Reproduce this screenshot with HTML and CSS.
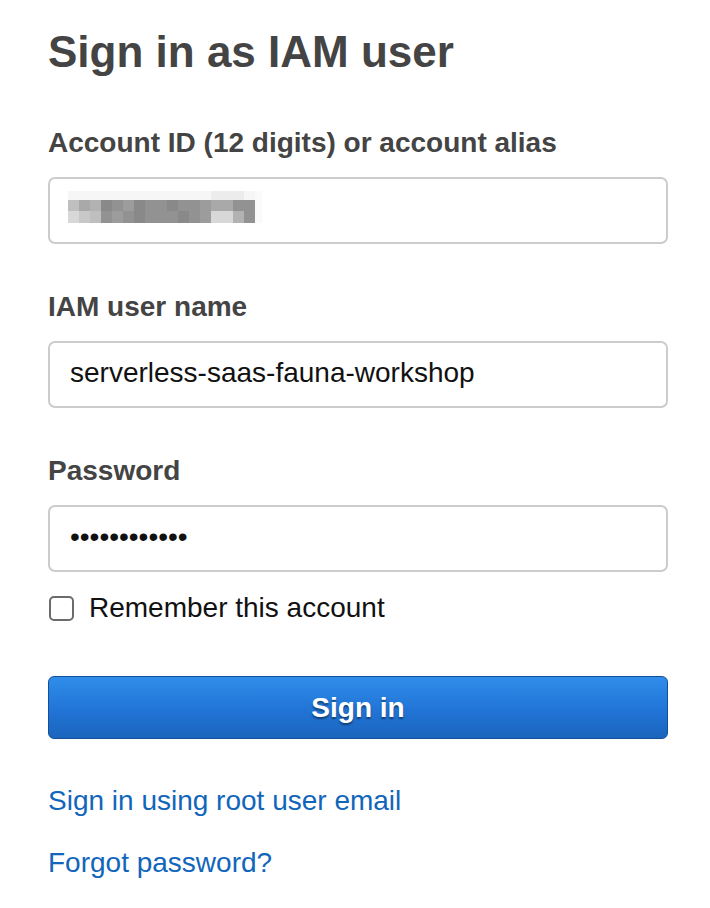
FILE: index.html
```html
<!DOCTYPE html>
<html lang="en">
<head>
<meta charset="utf-8">
<title>Sign in as IAM user</title>
<link rel="stylesheet" href="styles.css">
</head>
<body>
<main class="page">
  <h1 class="title">Sign in as IAM user</h1>

  <div class="field">
    <label class="label">Account ID (12 digits) or account alias</label>
    <div class="input">
      <div class="blur" aria-hidden="true">
        <span class="t1"></span><span class="t1"></span><span class="t1"></span><span class="t1"></span><span class="t1"></span><span class="t1"></span><span class="t1"></span><span class="t1"></span><span class="t1"></span><span class="t1"></span><span class="t1"></span><span class="t1"></span><span class="t1"></span><span class="t2"></span><span class="t2"></span><span class="t2"></span><span class="t1"></span><span class="t0"></span>
        <span class="g4"></span><span class="g6"></span><span class="g5"></span><span class="g9"></span><span class="g8"></span><span class="g7"></span><span class="g9"></span><span class="g8"></span><span class="g8"></span><span class="g9"></span><span class="g8"></span><span class="g8"></span><span class="g7"></span><span class="g6"></span><span class="g6"></span><span class="g8"></span><span class="g8"></span><span class="t0"></span>
        <span class="g2"></span><span class="g3"></span><span class="g4"></span><span class="g8"></span><span class="g7"></span><span class="g8"></span><span class="g9"></span><span class="g8"></span><span class="g8"></span><span class="g8"></span><span class="g9"></span><span class="g8"></span><span class="g7"></span><span class="g2"></span><span class="g2"></span><span class="g5"></span><span class="g8"></span><span class="t0"></span>
      </div>
    </div>
  </div>

  <div class="field">
    <label class="label">IAM user name</label>
    <div class="input"><span class="value">serverless-saas-fauna-workshop</span></div>
  </div>

  <div class="field">
    <label class="label">Password</label>
    <div class="input"><span class="value">••••••••••••</span></div>
  </div>

  <label class="remember">
    <span class="checkbox"></span>
    <span class="remember-text">Remember this account</span>
  </label>

  <button class="btn" type="button">Sign in</button>

  <nav class="links">
    <a class="link" href="#">Sign in using root user email</a>
    <a class="link" href="#">Forgot password?</a>
  </nav>
</main>
</body>
</html>
```

FILE: styles.css
```css
* { box-sizing: border-box; }
html, body {
  margin: 0;
  padding: 0;
  background: #ffffff;
}
body {
  font-family: "Liberation Sans", Arial, Helvetica, sans-serif;
}
.page {
  width: 710px;
  padding: 26px 42px 0 48px;
  display: flex;
  flex-direction: column;
}
.title {
  margin: 0;
  font-size: 44px;
  line-height: 52px;
  font-weight: 700;
  color: #444444;
}
.field {
  display: flex;
  flex-direction: column;
  margin-top: 49px;
}
.field + .field { margin-top: 47px; }
.label {
  font-size: 28px;
  font-weight: 700;
  color: #444444;
  line-height: 32px;
  margin-bottom: 18px;
}
.input {
  width: 620px;
  height: 67px;
  border: 2px solid #cccccc;
  border-radius: 7px;
  display: flex;
  align-items: center;
  padding-left: 20px;
  padding-bottom: 4px;
  background: #fff;
}
.value {
  font-size: 28px;
  color: #111111;
  line-height: 32px;
}
.blur {
  display: grid;
  grid-template-columns: repeat(17, 11px) 7px;
  grid-template-rows: 9px 11px 12px;
  margin-left: -2px;
  margin-bottom: 4px;
}
.blur span { display: block; }
.t0 { background: #fafafa; }
.t1 { background: #f6f6f6; }
.t2 { background: #ececec; }
.g2 { background: #d8d8d8; }
.g3 { background: #c8c8c8; }
.g4 { background: #bfbfbf; }
.g5 { background: #b2b2b2; }
.g6 { background: #a9a9a9; }
.g7 { background: #9c9c9c; }
.g8 { background: #929292; }
.g9 { background: #898989; }

.remember {
  display: flex;
  align-items: center;
  margin-top: 20px;
  gap: 15px;
  height: 32px;
}
.checkbox {
  width: 25px;
  height: 25px;
  border: 2px solid #6b6b6b;
  border-radius: 5px;
  margin-left: 1px;
  background: #fff;
}
.remember-text {
  font-size: 28px;
  color: #111111;
  line-height: 32px;
}
.btn {
  margin-top: 52px;
  width: 620px;
  height: 63px;
  border: 1px solid #14509a;
  border-radius: 6px;
  background: linear-gradient(to bottom, #2f8de9 0%, #2174d6 55%, #1a65bd 100%);
  color: #ffffff;
  font-family: "Liberation Sans", Arial, Helvetica, sans-serif;
  font-size: 28px;
  font-weight: 700;
  text-shadow: 0 2px 2px rgba(0, 0, 0, 0.45);
  padding: 0;
  cursor: pointer;
}
.links {
  display: flex;
  flex-direction: column;
  margin-top: 46px;
  gap: 30px;
}
.link {
  font-size: 28px;
  line-height: 32px;
  color: #1166bb;
  text-decoration: none;
  align-self: flex-start;
}
```
